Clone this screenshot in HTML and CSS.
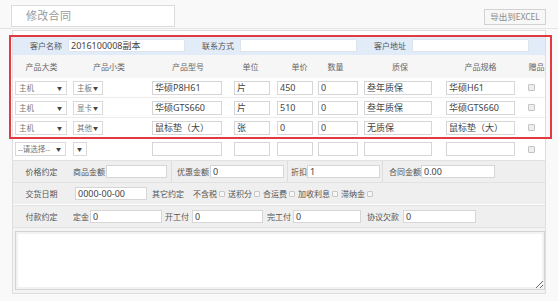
FILE: index.html
```html
<!DOCTYPE html>
<html lang="zh-CN">
<head>
<meta charset="utf-8">
<title>修改合同</title>
<link rel="stylesheet" href="styles.css">
</head>
<body>
<header class="topbar">
  <div class="title">修改合同</div>
  <button class="export" type="button">导出到EXCEL</button>
</header>
<main class="panel">
  <div class="highlight"></div>

  <div class="cust-row">
    <label class="cl">客户名称</label><input class="ci" value="2016100008副本">
    <label class="cl">联系方式</label><input class="ci" value="">
    <label class="cl">客户地址</label><input class="ci" value="">
  </div>

  <div class="grid head">
    <span>产品大类</span><span>产品小类</span><span>产品型号</span><span>单位</span><span class="h-price">单价</span><span class="h-qty">数量</span><span>质保</span><span>产品规格</span><span>赠品</span>
  </div>

  <div class="grid row">
    <span class="sel s1">主机</span><span class="sel s2">主板</span>
    <input class="c3" value="华硕P8H61"><input class="c4" value="片"><input class="c5" value="450"><input class="c6" value="0"><input class="c7" value="叁年质保"><input class="c8" value="华硕H61"><input type="checkbox" class="cbx">
  </div>
  <div class="grid row">
    <span class="sel s1">主机</span><span class="sel s2">显卡</span>
    <input class="c3" value="华硕GTS660"><input class="c4" value="片"><input class="c5" value="510"><input class="c6" value="0"><input class="c7" value="叁年质保"><input class="c8" value="华硕GTS660"><input type="checkbox" class="cbx">
  </div>
  <div class="grid row">
    <span class="sel s1">主机</span><span class="sel s2">其他</span>
    <input class="c3" value="鼠标垫（大）"><input class="c4" value="张"><input class="c5" value="0"><input class="c6" value="0"><input class="c7" value="无质保"><input class="c8" value="鼠标垫（大）"><input type="checkbox" class="cbx">
  </div>
  <div class="grid row blank">
    <span class="sel s1 choose">--请选择--</span><span class="sel s2 tiny"></span>
    <input class="c3" value=""><input class="c4" value=""><input class="c5" value=""><input class="c6" value=""><input class="c7" value=""><input class="c8" value=""><input type="checkbox" class="cbx">
  </div>

  <div class="frow">
    <span class="rl">价格约定</span>
    <span class="cell p1"><span class="fl">商品金额</span><input class="fi w61" value=""></span>
    <span class="cell p2"><span class="fl">优惠金额</span><input class="fi w74" value="0"></span>
    <span class="cell p3"><span class="fl">折扣</span><input class="fi w73" value="1"></span>
    <span class="cell p4"><span class="fl">合同金额</span><input class="fi w74" value="0.00"></span>
  </div>

  <div class="frow">
    <span class="rl">交货日期</span>
    <input class="fi date" value="0000-00-00">
    <span class="fl other">其它约定</span>
    <span class="opt first">不含税</span><input type="checkbox" class="cbs">
    <span class="opt">送积分</span><input type="checkbox" class="cbs">
    <span class="opt">合运费</span><input type="checkbox" class="cbs">
    <span class="opt">加收利息</span><input type="checkbox" class="cbs">
    <span class="opt">滞纳金</span><input type="checkbox" class="cbs">
  </div>

  <div class="frow pay">
    <span class="rl">付款约定</span>
    <span class="fl pl1">定金</span><input class="fi pi1" value="0">
    <span class="fl pl2">开工付</span><input class="fi pi2" value="0">
    <span class="fl pl3">完工付</span><input class="fi pi3" value="0">
    <span class="fl pl4">协议欠款</span><input class="fi pi4" value="0">
  </div>

  <div class="notes">
    <textarea class="memo"></textarea>
  </div>
</main>
</body>
</html>
```
FILE: styles.css
```css
* { box-sizing: border-box; margin: 0; padding: 0; }

body {
  width: 558px;
  height: 301px;
  overflow: hidden;
  background: #f9f9f9;
  font-family: "Noto Sans", "Noto Sans CJK SC", sans-serif;
  font-size: 8px;
  color: #555;
}

input, select, textarea, button {
  font-family: "Noto Sans", "Noto Sans CJK SC", sans-serif;
}

/* ---------- top bar ---------- */
.topbar {
  height: 29px;
  border-bottom: 1px solid #e4e4e4;
  display: flex;
  justify-content: space-between;
  align-items: flex-start;
  padding: 5px 12px 0 11px;
}
.title {
  width: 164px;
  height: 22px;
  border: 1px solid #dcdcdc;
  background: #fff;
  font-size: 11px;
  line-height: 20px;
  color: #9a9a9a;
  padding-left: 14px;
  letter-spacing: 0.3px;
}
.export {
  margin-top: 4px;
  width: 62px;
  height: 16px;
  border: 1px solid #d2d2d2;
  background: #f7f7f7;
  font-size: 8.5px;
  color: #8a8a8a;
  line-height: 14px;
}

/* ---------- main panel ---------- */
.panel {
  position: relative;
  margin: 1px 12px 0;
  width: 534px;
  height: 264px;
  border: 1px solid #dedede;
  background: #fff;
  padding-top: 5px;
}
.highlight {
  position: absolute;
  left: -4px;
  top: 4px;
  width: 543px;
  height: 104px;
  border: 2px solid #e23a42;
  pointer-events: none;
}

input {
  height: 14px;
  border: 1px solid #d6d6d6;
  background: #fff;
  font-size: 9px;
  color: #444;
  padding: 0 2px;
  outline: none;
}

/* customer row */
.cust-row {
  height: 19px;
  background: #e2ecf8;
  display: flex;
  align-items: center;
}
.cl {
  width: 49px;
  text-align: right;
  color: #555;
}
.ci {
  margin-left: 6px;
  width: 117px;
  height: 13px;
  border-color: #dde4ec;
}

/* product grid */
.grid {
  display: grid;
  grid-template-columns: 57px 78px 80px 45px 43px 45px 78px 83px 23px;
  align-items: center;
}
.head {
  height: 23px;
  background: #f7f6f6;
  text-align: center;
  color: #666;
}
.head .h-price { padding-left: 10px; }
.head .h-qty { padding-right: 6px; }
.head span:last-child { padding-left: 6px; }

.row {
  height: 20px;
  border-bottom: 1px solid #ececec;
}
.row.blank { height: 22px; border-bottom: none; }

.sel {
  position: relative;
  height: 14px;
  border: 1px solid #dadada;
  background: #fff;
  font-size: 7.5px;
  line-height: 12px;
  padding-left: 3px;
  color: #777;
}
.sel::after {
  content: "▼";
  position: absolute;
  right: 4px;
  top: 0;
  font-size: 5px;
  line-height: 12px;
  color: #444;
}
.s1 { margin-left: 2px; width: 52px; }
.s2 { margin-left: 3px; width: 30px; }
.choose { width: 51px; padding-left: 2px; }
.tiny { width: 14px; }
.tiny::after { right: 4px; }

.c3 { margin-left: 4px; width: 70px; }
.c4 { margin-left: 6px; width: 36px; }
.c5 { margin-left: 4px; width: 36px; }
.c6 { margin-left: 2px; width: 40px; }
.c7 { margin-left: 3px; width: 68px; }
.c8 { margin-left: 7px; width: 69px; }

input[type="checkbox"] {
  appearance: none;
  -webkit-appearance: none;
  padding: 0;
}
.cbx {
  margin-left: 6px;
  width: 7px;
  height: 7px;
  border: 1px solid #c4c4c4;
  border-radius: 1px;
  background: #eeeeee;
}

/* form rows */
.frow {
  height: 22px;
  background: #efefef;
  border-top: 1px solid #e2e2e2;
  display: flex;
  align-items: center;
}
.frow .fi { height: 13px; }
.rl {
  width: 57px;
  text-align: center;
  color: #555;
}
.fl { color: #555; }
.cell {
  height: 100%;
  display: flex;
  align-items: center;
}
.p1 { width: 102px; padding-left: 3px; border-right: 1px solid #dddddd; }
.p1 .fl { width: 33px; }
.p2 { width: 116px; padding-left: 5px; border-right: 1px solid #dddddd; }
.p2 .fl { width: 33px; }
.p3 { width: 95px; padding-left: 3px; border-right: 1px solid #dddddd; }
.p3 .fl { width: 16px; }
.p4 { padding-left: 6px; }
.p4 .fl { width: 32px; }
.w61 { width: 61px; }
.w74 { width: 74px; }
.w73 { width: 73px; }

.date { margin-left: 5px; width: 72px; }
.other { margin-left: 5px; }
.opt { margin-left: 3px; }
.opt.first { margin-left: 9px; }
.cbs {
  margin-left: 2px;
  width: 6px;
  height: 6px !important;
  border: 1px solid #c8c8c8;
  border-radius: 1px;
  background: #f6f6f6;
}

.pay { margin-top: 1px; }
.pl1 { margin-left: 3px; }
.pi1 { margin-left: 1px; width: 72px; }
.pl2 { margin-left: 3px; }
.pi2 { margin-left: 3px; width: 71px; }
.pl3 { margin-left: 4px; }
.pi3 { margin-left: 2px; width: 68px; }
.pl4 { margin-left: 6px; }
.pi4 { margin-left: 4px; width: 73px; }

.notes {
  background: #f3f3f3;
  padding: 3px 0 3px 2px;
  border-top: 1px solid #e2e2e2;
}
.memo {
  display: block;
  width: 530px;
  height: 59px;
  border: 1px solid #d4d4d4;
  box-shadow: inset 0 0 0 2px #f2f2f2;
  background: #fff;
  resize: vertical;
}
```
